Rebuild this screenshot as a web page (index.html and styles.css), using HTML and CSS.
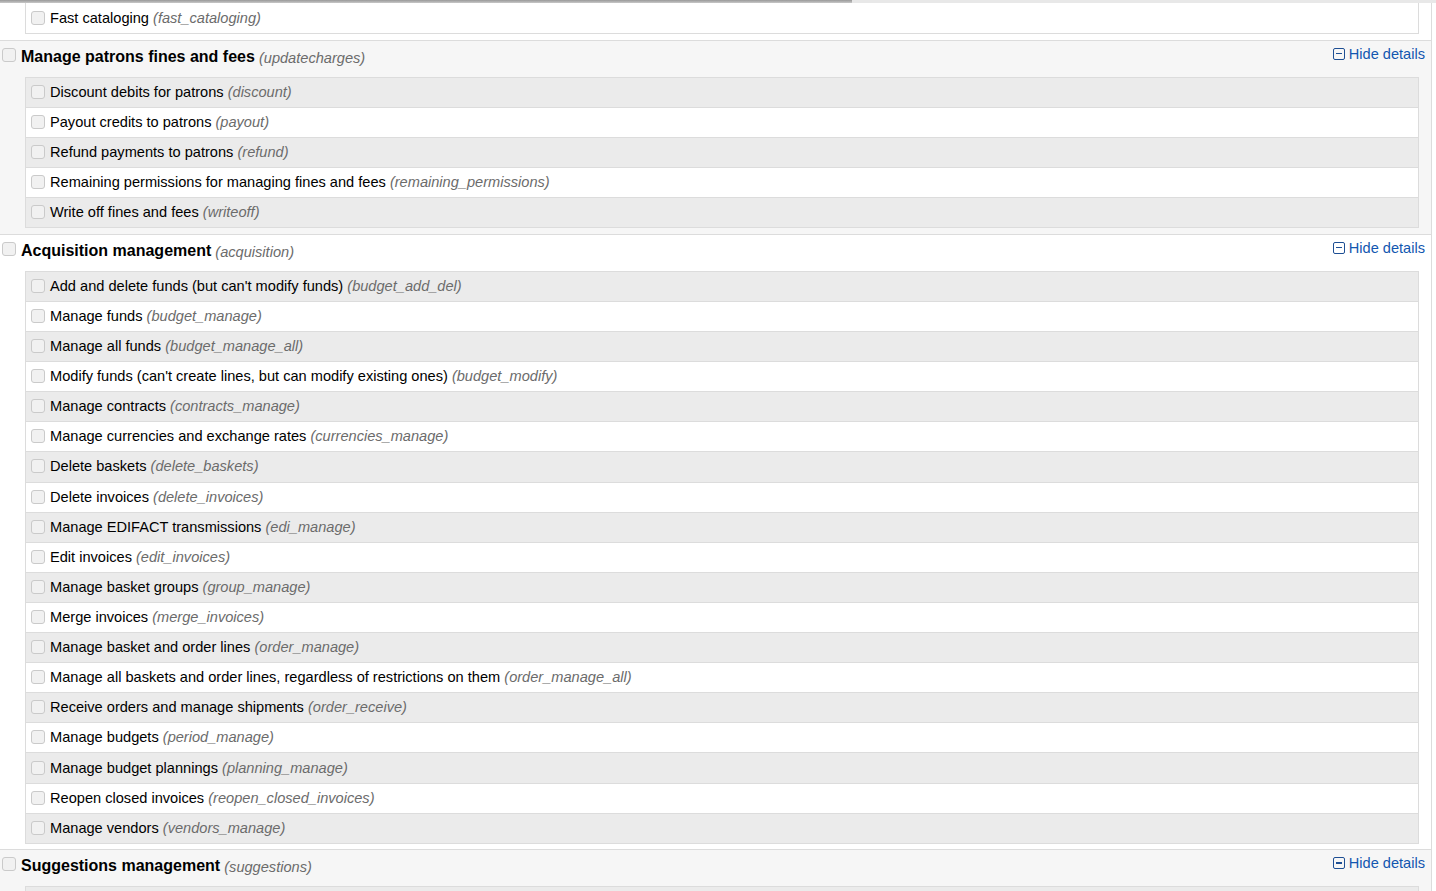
FILE: index.html
```html
<!DOCTYPE html>
<html lang="en">
<head>
    <meta charset="UTF-8">
    <title>Set permissions</title>
    <link rel="stylesheet" href="styles.css">
</head>
<body>
    <div class="top-strip"><div class="top-strip-dark"></div></div>

    <ul class="perms">
        <li class="group">
            <ul class="sub">
                <li class="sub-row even"><input type="checkbox"><label>Fast cataloging <i>(fast_cataloging)</i></label></li>
            </ul>
        </li>

        <li class="group alt">
            <div class="group-head">
                <input type="checkbox">
                <label class="group-title"><b>Manage patrons fines and fees</b> <i>(updatecharges)</i></label>
                <a class="toggle" href="#"><span class="toggle-icon"></span>Hide details</a>
            </div>
            <ul class="sub">
                <li class="sub-row"><input type="checkbox"><label>Discount debits for patrons <i>(discount)</i></label></li>
                <li class="sub-row even"><input type="checkbox"><label>Payout credits to patrons <i>(payout)</i></label></li>
                <li class="sub-row"><input type="checkbox"><label>Refund payments to patrons <i>(refund)</i></label></li>
                <li class="sub-row even"><input type="checkbox"><label>Remaining permissions for managing fines and fees <i>(remaining_permissions)</i></label></li>
                <li class="sub-row"><input type="checkbox"><label>Write off fines and fees <i>(writeoff)</i></label></li>
            </ul>
        </li>

        <li class="group">
            <div class="group-head">
                <input type="checkbox">
                <label class="group-title"><b>Acquisition management</b> <i>(acquisition)</i></label>
                <a class="toggle" href="#"><span class="toggle-icon"></span>Hide details</a>
            </div>
            <ul class="sub">
                <li class="sub-row"><input type="checkbox"><label>Add and delete funds (but can't modify funds) <i>(budget_add_del)</i></label></li>
                <li class="sub-row even"><input type="checkbox"><label>Manage funds <i>(budget_manage)</i></label></li>
                <li class="sub-row"><input type="checkbox"><label>Manage all funds <i>(budget_manage_all)</i></label></li>
                <li class="sub-row even"><input type="checkbox"><label>Modify funds (can't create lines, but can modify existing ones) <i>(budget_modify)</i></label></li>
                <li class="sub-row"><input type="checkbox"><label>Manage contracts <i>(contracts_manage)</i></label></li>
                <li class="sub-row even"><input type="checkbox"><label>Manage currencies and exchange rates <i>(currencies_manage)</i></label></li>
                <li class="sub-row"><input type="checkbox"><label>Delete baskets <i>(delete_baskets)</i></label></li>
                <li class="sub-row even"><input type="checkbox"><label>Delete invoices <i>(delete_invoices)</i></label></li>
                <li class="sub-row"><input type="checkbox"><label>Manage EDIFACT transmissions <i>(edi_manage)</i></label></li>
                <li class="sub-row even"><input type="checkbox"><label>Edit invoices <i>(edit_invoices)</i></label></li>
                <li class="sub-row"><input type="checkbox"><label>Manage basket groups <i>(group_manage)</i></label></li>
                <li class="sub-row even"><input type="checkbox"><label>Merge invoices <i>(merge_invoices)</i></label></li>
                <li class="sub-row"><input type="checkbox"><label>Manage basket and order lines <i>(order_manage)</i></label></li>
                <li class="sub-row even"><input type="checkbox"><label>Manage all baskets and order lines, regardless of restrictions on them <i>(order_manage_all)</i></label></li>
                <li class="sub-row"><input type="checkbox"><label>Receive orders and manage shipments <i>(order_receive)</i></label></li>
                <li class="sub-row even"><input type="checkbox"><label>Manage budgets <i>(period_manage)</i></label></li>
                <li class="sub-row"><input type="checkbox"><label>Manage budget plannings <i>(planning_manage)</i></label></li>
                <li class="sub-row even"><input type="checkbox"><label>Reopen closed invoices <i>(reopen_closed_invoices)</i></label></li>
                <li class="sub-row"><input type="checkbox"><label>Manage vendors <i>(vendors_manage)</i></label></li>
            </ul>
        </li>

        <li class="group alt">
            <div class="group-head">
                <input type="checkbox">
                <label class="group-title"><b>Suggestions management</b> <i>(suggestions)</i></label>
                <a class="toggle" href="#"><span class="toggle-icon"></span>Hide details</a>
            </div>
            <ul class="sub">
                <li class="sub-row"></li>
            </ul>
        </li>
    </ul>
</body>
</html>
```

FILE: styles.css
```css
body {
    margin: 0;
    font-family: "Liberation Sans", Arial, sans-serif;
    font-size: 14.6px;
    color: #000;
    background: #fff;
    overflow: hidden;
}

.top-strip {
    height: 3px;
    background: #e8e8e8;
}

.top-strip-dark {
    width: 852px;
    height: 3px;
    background: linear-gradient(#999, #c8c8c8);
}

ul {
    list-style: none;
    margin: 0;
    padding: 0;
}

.perms {
    width: 1431px;
    border-right: 1px solid #dcdcdc;
}

.group {
    border-top: 1px solid #dcdcdc;
    padding-bottom: 5.6px;
}

.group:first-child {
    border-top: none;
}

.group.alt {
    background: #f6f6f6;
}

.group-head {
    display: flex;
    align-items: flex-start;
    height: 36px;
    box-sizing: border-box;
    padding: 7px 6px 0 2px;
}

.group-head input {
    margin-top: 2px;
}

.group-title {
    flex: 1;
    margin-left: 5px;
    line-height: 18px;
}

.group-title b {
    font-size: 16px;
}

.group-title i {
    position: relative;
    top: 1px;
}

i {
    color: #6b6b6b;
}

input[type="checkbox"] {
    appearance: none;
    -webkit-appearance: none;
    width: 14px;
    height: 14px;
    margin: 0;
    border: 1px solid #cacaca;
    border-radius: 3px;
    background: #f1f1f1;
    flex: none;
}

.toggle {
    display: flex;
    align-items: center;
    margin-top: -2px;
    line-height: 16px;
    color: #1257b0;
    text-decoration: none;
}

.toggle-icon {
    position: relative;
    width: 10px;
    height: 10px;
    margin-right: 4px;
    border: 1.5px solid #1e4f94;
    border-radius: 2px;
}

.toggle-icon::after {
    content: "";
    position: absolute;
    left: 2px;
    right: 2px;
    top: 4px;
    height: 1.5px;
    background: #1e4f94;
}

.sub {
    margin: 0 12px 0 25px;
    border: 1px solid #dcdcdc;
    border-top-width: 0;
    background: #ebebeb;
}

.sub-row {
    display: flex;
    align-items: center;
    height: 30.11px;
    box-sizing: border-box;
    padding: 0 0 1px 5px;
    border-top: 1px solid #dcdcdc;
    white-space: pre;
}

.sub-row input {
    margin-right: 5px;
}

.sub-row.even {
    background: #fff;
}

.group:first-child .sub-row {
    height: 30px;
    padding-bottom: 0;
    border-top: none;
}
```
